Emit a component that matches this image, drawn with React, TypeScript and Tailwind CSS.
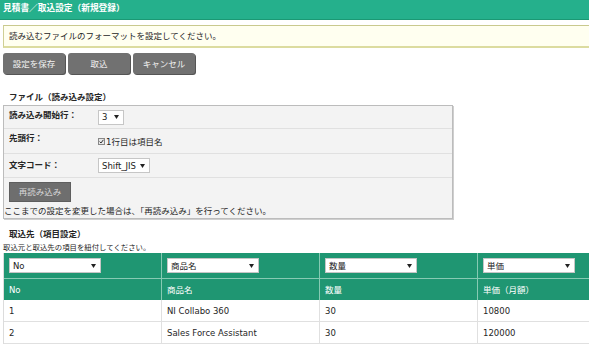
function Sel({ value, className }: { value: string; className: string }) {
  return (
    <div
      className={
        "flex items-center justify-between border border-[#c6c6c6] bg-white pl-[3px] pr-[4px] text-[#222] " +
        className
      }
    >
      <span className="leading-[12px]">{value}</span>
      <svg width="5" height="4" viewBox="0 0 5 4">
        <path d="M0 0h5L2.5 4z" fill="#222" />
      </svg>
    </div>
  )
}

const headers = ["No", "商品名", "数量", "単価"]
const labels = ["No", "商品名", "数量", "単価（月額）"]
const rows = [
  ["1", "NI Collabo 360", "30", "10800"],
  ["2", "Sales Force Assistant", "30", "120000"],
]

export default function App() {
  return (
    <div className="h-[351px] w-[589px] overflow-hidden bg-white font-['DejaVu_Sans','Noto_Sans_CJK_JP',sans-serif] text-[8.5px] leading-[12px] text-[#262626]">
      {/* title bar */}
      <div className="h-[20px] border-b border-[#1b9874] bg-[#25b08c] pl-[3px] pt-[2px] text-[8.7px] font-bold text-white">
        見積書／取込設定（新規登録）
      </div>

      {/* notice */}
      <div className="ml-[3px] mt-[5px] flex h-[23px] items-center border-l border-t border-b-2 border-l-[#cfcf95] border-t-[#c9c98e] border-b-[#dcdca0] bg-[#fffff0] pl-[5px]">
        読み込むファイルのフォーマットを設定してください。
      </div>

      <div className="ml-[3px] mt-[5px] flex gap-[3px]">
        <button className="h-[21px] w-[62px] rounded-[3px] bg-[#717171] text-[#f2f2f2] shadow-[1px_1px_0_#555]">
          設定を保存
        </button>
        <button className="h-[21px] w-[62px] rounded-[3px] bg-[#717171] text-[#f2f2f2] shadow-[1px_1px_0_#555]">
          取込
        </button>
        <button className="h-[21px] w-[62px] rounded-[3px] bg-[#717171] text-[#f2f2f2] shadow-[1px_1px_0_#555]">
          キャンセル
        </button>
      </div>

      <div className="ml-[9px] mt-[17px] font-bold">ファイル（読み込み設定）</div>

      {/* file settings panel */}
      <div className="ml-[3px] mt-[2px] w-[450px] border border-[#bcbcbc] bg-[#f3f3f3] shadow-[1px_1px_0_#cfcfcf]">
        <div className="flex h-[23px] border-b border-[#e0e0e0]">
          <div className="w-[94px] pl-[5px] pt-[3px] font-bold">読み込み開始行：</div>
          <div className="flex items-center">
            <Sel value="3" className="h-[15px] w-[26px]" />
          </div>
        </div>
        <div className="flex h-[25px] border-b border-[#e0e0e0]">
          <div className="w-[94px] pl-[5px] pt-[3px] font-bold">先頭行：</div>
          <div className="flex items-center gap-[1px] pt-[1px]">
            <span className="flex h-[7px] w-[7px] items-center justify-center border border-[#888] bg-[#e8e8e8]">
              <svg width="5" height="5" viewBox="0 0 5 5">
                <path d="M0.6 2.6 L2 4 L4.4 0.8" stroke="#333" strokeWidth="1" fill="none" />
              </svg>
            </span>
            <span>1行目は項目名</span>
          </div>
        </div>
        <div className="flex h-[24px] border-b border-[#e0e0e0]">
          <div className="w-[94px] pl-[5px] pt-[5px] font-bold">文字コード：</div>
          <div className="flex items-center">
            <Sel value="Shift_JIS" className="h-[15px] w-[52px]" />
          </div>
        </div>
        <div className="h-[40px]">
          <button className="ml-[5px] mt-[4px] h-[20px] w-[62px] border border-[#5e5e5e] bg-[#6e6e6e] text-[#d8d8d8]">
            再読み込み
          </button>
          <div className="mt-[3px]">
            ここまでの設定を変更した場合は、「再読み込み」を行ってください。
          </div>
        </div>
      </div>

      <div className="ml-[9px] mt-[9px] font-bold">取込先（項目設定）</div>
      <div className="ml-[3px] mt-[3px] text-[7.4px] leading-[10px]">取込元と取込先の項目を紐付してください。</div>

      {/* mapping table */}
      <div className="ml-[3px] w-[634px] border-l border-[#dcdcdc]">
        <div className="flex h-[26px] border-b border-[#86cab3] bg-[#1f9672]">
          {headers.map((h) => (
            <div key={h} className="flex w-[158px] items-center border-r border-[#86cab3] px-[5px]">
              <Sel value={h} className="h-[15px] w-[92px]" />
            </div>
          ))}
        </div>
        <div className="flex h-[21px] bg-[#1f9672] text-white">
          {labels.map((h) => (
            <div key={h} className="flex w-[158px] items-center border-r border-[#86cab3] px-[5px]">
              {h}
            </div>
          ))}
        </div>
        {rows.map((r) => (
          <div key={r[0]} className="flex h-[22px] border-b border-[#e0e0e0]">
            {r.map((c, i) => (
              <div key={i} className="flex w-[158px] items-center border-r border-[#e0e0e0] px-[5px]">
                {c}
              </div>
            ))}
          </div>
        ))}
      </div>
    </div>
  )
}
